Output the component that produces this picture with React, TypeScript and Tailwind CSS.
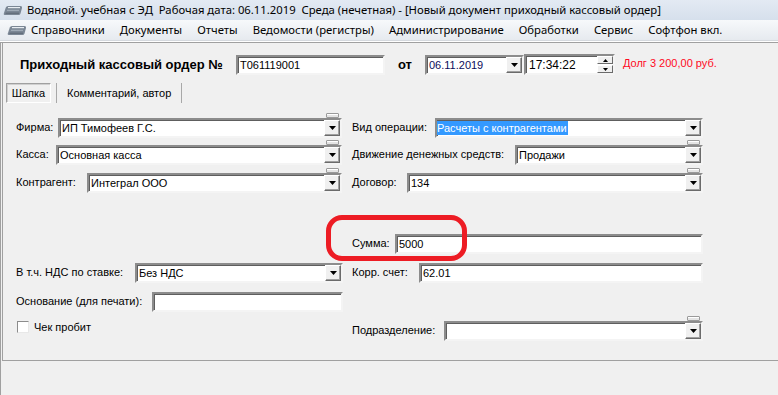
import React from "react";

const ui = { fontFamily: '"Liberation Sans", Arial, sans-serif' };
const winFont = { fontFamily: '"Noto Sans", "Open Sans", sans-serif' };

const menuItems = ["Справочники", "Документы", "Отчеты", "Ведомости (регистры)", "Администрирование", "Обработки", "Сервис", "Софтфон вкл."];

function AppIcon() {
  return (
    <svg width="20" height="11" viewBox="0 0 20 11">
      <path d="M5 1 H17.5 Q19.5 1 19 3 L17.5 8.5 Q17 10 15.5 10 H2 Q0.3 10 0.8 8.5 L2.8 2.5 Q3.3 1 5 1Z" fill="#7b8795" />
      <path d="M5 2.6 H17" stroke="#e8edf2" strokeWidth="1.2" />
      <path d="M2.5 8.2 H16" stroke="#5a6471" strokeWidth="1" />
      <path d="M4 5.3 H16" stroke="#a9b3be" strokeWidth="1" />
    </svg>
  );
}

function Arrow() {
  return (
    <svg width="7" height="4" viewBox="0 0 7 4">
      <path d="M0 0 H7 L3.5 4Z" fill="#000" />
    </svg>
  );
}

const sunken =
  "border-2 border-t-[#8c8c8c] border-l-[#8c8c8c] border-b-[#f4f4f4] border-r-[#f4f4f4] bg-white shadow-[inset_1px_1px_0_#5e5e5e]";

function DropBtn() {
  return (
    <div className="ml-auto flex h-[16px] w-[16px] shrink-0 items-center justify-center border border-t-white border-l-white border-b-[#6b6b6b] border-r-[#6b6b6b] bg-[#f0f0f0] shadow-[inset_-1px_-1px_0_#a0a0a0]">
      <Arrow />
    </div>
  );
}

function Combo({ value, selected, bar, className = "" }: { value?: string; selected?: boolean; bar?: boolean; className?: string }) {
  return (
    <div className={`relative flex h-[20px] items-center ${sunken} ${className}`}>
      {bar && <div className="absolute -top-[7px] right-[1px] h-[5px] w-[13px] rounded-[1px] border border-[#9a9a9a] bg-[#e4e4e4] shadow-[inset_0_1px_0_#ffffff]" />}
      {selected ? (
        <span className="flex h-[14px] items-center bg-[#3399ff] pr-[1px] text-[11px] leading-[14px] text-white">{value}</span>
      ) : (
        <span className="pl-[2px] text-[11px] leading-[14px] text-black">{value}</span>
      )}
      <DropBtn />
    </div>
  );
}

function Field({ value, className = "" }: { value?: string; className?: string }) {
  return (
    <div className={`flex h-[20px] items-center ${sunken} ${className}`}>
      <span className="pl-[2px] text-[11px] leading-[14px] text-black">{value}</span>
    </div>
  );
}

function Label({ text, w }: { text: string; w: string }) {
  return <div className={`${w} shrink-0 self-start pt-[2px] text-[11px] leading-[14px] text-[#000]`}>{text}</div>;
}

export default function App() {
  return (
    <div className="relative flex h-[395px] w-[778px] flex-col overflow-hidden bg-[#f0f0f0]" style={ui}>
      {/* title bar */}
      <div className="flex h-[20px] shrink-0 items-center bg-gradient-to-b from-[#e3eaf3] to-[#d6e0ec] pl-[3px]" style={winFont}>
        <AppIcon />
        <span className="ml-[4px] whitespace-pre text-[11.3px] leading-[16px] text-black">
          Водяной. учебная с ЭД  Рабочая дата: 06.11.2019  Среда (нечетная) - [Новый документ приходный кассовый ордер]
        </span>
      </div>

      {/* menu bar */}
      <div className="flex h-[20px] shrink-0 items-center bg-gradient-to-b from-[#f7f9fb] to-[#e6eaef] pl-[7px]" style={winFont}>
        <AppIcon />
        <div className="ml-[4px] flex gap-[15px] text-[11.3px] leading-[16px] text-black">
          {menuItems.map((m) => (
            <span key={m} className="whitespace-nowrap">{m}</span>
          ))}
        </div>
      </div>
      <div className="h-[3px] shrink-0 border-t border-b border-t-[#d5d9de] border-b-[#a0a0a0] bg-white" />

      {/* window body */}
      <div className="flex-1 border-l border-[#a0a0a0] pl-[1px]">
        <div className="h-[318px] border-b border-l border-[#a0a0a0]">
          {/* header */}
          <div className="flex items-start pl-[17px] pt-[12px]">
            <div className="w-[216px] shrink-0 pt-[2px] text-[13px] font-bold leading-[16px] text-black">Приходный кассовый ордер №</div>
            <Field value="Т061119001" className="w-[149px]" />
            <div className="ml-[13px] w-[27px] pt-[2px] text-[13px] font-bold leading-[16px] text-black">от</div>
            <div className={`flex h-[20px] w-[99px] items-center ${sunken}`}>
              <span className="pl-[2px] text-[11px] leading-[14px] text-[#0c0c5a]">06.11.2019</span>
              <DropBtn />
            </div>
            <div className={`-mt-[1px] flex h-[21px] w-[91px] items-center ${sunken}`}>
              <span className="pl-[3px] text-[12px] leading-[14px] text-black">17:34:22</span>
              <div className="ml-auto flex h-[17px] w-[16px] flex-col">
                <div className="flex h-[8px] items-center justify-center border border-t-white border-l-white border-b-[#6b6b6b] border-r-[#6b6b6b] bg-[#f0f0f0]">
                  <svg width="5" height="3" viewBox="0 0 5 3"><path d="M0 3 H5 L2.5 0Z" fill="#000" /></svg>
                </div>
                <div className="mt-[1px] flex h-[8px] items-center justify-center border border-t-white border-l-white border-b-[#6b6b6b] border-r-[#6b6b6b] bg-[#f0f0f0]">
                  <svg width="5" height="3" viewBox="0 0 5 3"><path d="M0 0 H5 L2.5 3Z" fill="#000" /></svg>
                </div>
              </div>
            </div>
            <div className="ml-[8px] pt-[1px] text-[11px] leading-[14px] text-[#ff0a1e]">Долг 3 200,00 руб.</div>
          </div>

          {/* tabs */}
          <div className="mt-[8px] flex h-[20px] items-stretch pl-[3px] text-[11px] leading-[14px] text-black">
            <div className="flex w-[45px] items-center justify-center border border-t-[#a0a0a0] border-l-[#a0a0a0] border-b-white border-r-white shadow-[inset_1px_1px_0_#d0d0d0]">Шапка</div>
            <div className="ml-[5px] w-[1px] bg-[#a8a8a8]" />
            <div className="flex items-center pl-[10px] pr-[10px]">Комментарий, автор</div>
            <div className="w-[1px] bg-[#a8a8a8]" />
          </div>

          {/* form */}
          <div className="pl-[13px] text-[11px]">
            <div className="mt-[15px] flex">
              <div className="flex w-[326px]">
                <Label text="Фирма:" w="w-[42px]" />
                <Combo value="ИП Тимофеев Г.С." bar className="flex-1" />
              </div>
              <div className="ml-[10px] flex w-[351px]">
                <Label text="Вид операции:" w="w-[83px]" />
                <Combo value="Расчеты с контрагентами" selected className="flex-1" />
              </div>
            </div>

            <div className="mt-[7px] flex">
              <div className="flex w-[326px]">
                <Label text="Касса:" w="w-[40px]" />
                <Combo value="Основная касса" bar className="flex-1" />
              </div>
              <div className="ml-[10px] flex w-[351px]">
                <Label text="Движение денежных средств:" w="w-[163px]" />
                <Combo value="Продажи" bar className="flex-1" />
              </div>
            </div>

            <div className="mt-[8px] flex">
              <div className="flex w-[326px]">
                <Label text="Контрагент:" w="w-[71px]" />
                <Combo value="Интеграл ООО" bar className="flex-1" />
              </div>
              <div className="ml-[10px] flex w-[351px]">
                <Label text="Договор:" w="w-[55px]" />
                <Combo value="134" bar className="flex-1" />
              </div>
            </div>

            <div className="mt-[41px] flex">
              <div className="w-[326px]" />
              <div className="ml-[10px] flex w-[351px]">
                <Label text="Сумма:" w="w-[43px]" />
                <Field value="5000" className="flex-1" />
              </div>
            </div>

            <div className="mt-[9px] flex">
              <div className="flex w-[327px]">
                <Label text="В т.ч. НДС по ставке:" w="w-[119px]" />
                <Combo value="Без НДС" className="flex-1" />
              </div>
              <div className="ml-[9px] flex w-[351px]">
                <Label text="Корр. счет:" w="w-[67px]" />
                <Field value="62.01" className="flex-1" />
              </div>
            </div>

            <div className="mt-[9px] flex">
              <div className="flex w-[327px]">
                <Label text="Основание (для печати):" w="w-[136px]" />
                <Field className="flex-1" />
              </div>
            </div>

            <div className="mt-[9px] flex">
              <div className="flex w-[327px] items-start pl-[1px]">
                <div className="h-[12px] w-[12px] border border-t-[#8c8c8c] border-l-[#8c8c8c] border-b-[#e8e8e8] border-r-[#e8e8e8] bg-white" />
                <span className="ml-[5px] text-[11px] leading-[13px]">Чек пробит</span>
              </div>
              <div className="ml-[9px] flex w-[351px]">
                <Label text="Подразделение:" w="w-[92px]" />
                <Combo bar className="flex-1" />
              </div>
            </div>
          </div>
        </div>
      </div>

      {/* red highlight around Сумма */}
      <div className="pointer-events-none absolute left-[326px] top-[215px] h-[46px] w-[141px] rounded-[16px] border-[5px] border-[#ed1c24]" />
    </div>
  );
}
